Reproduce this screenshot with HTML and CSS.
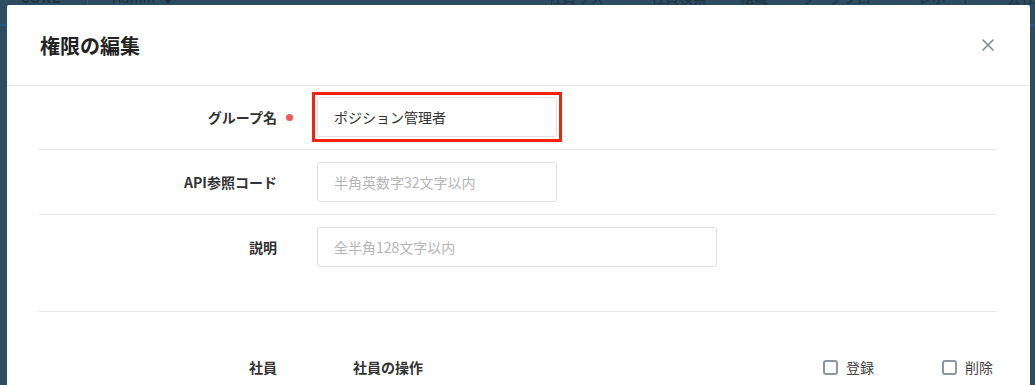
FILE: index.html
```html
<!DOCTYPE html>
<html lang="ja">

<head>
    <meta charset="UTF-8">
    <meta name="viewport" content="width=device-width, initial-scale=1.0">
    <title>権限の編集</title>
    <link rel="stylesheet" href="styles.css">
</head>

<body>
    <!-- Página de fondo (tapada por el modal) -->
    <header class="nav">
        <span class="nav-logo">CORE</span>
        <span class="nav-divider"></span>
        <span class="nav-admin">Admin <span class="nav-caret"></span></span>
        <nav class="nav-menu">
            <span>社員リスト</span>
            <span>社員検索</span>
            <span>組織</span>
            <span>ワークフロー</span>
            <span>レポート</span>
            <span>会社</span>
        </nav>
    </header>

    <div class="overlay">
        <div class="modal">
            <div class="modal-header">
                <h1 class="modal-title">権限の編集</h1>
                <button class="modal-close" type="button" aria-label="閉じる">
                    <svg width="12" height="12" viewBox="0 0 12 12">
                        <path d="M1 1 L11 11 M11 1 L1 11" stroke="#7d8a97" stroke-width="1.6" stroke-linecap="round" fill="none" />
                    </svg>
                </button>
            </div>

            <div class="modal-body">
                <div class="form-row">
                    <label class="form-label required">グループ名</label>
                    <span class="highlight">
                        <input class="form-input" type="text" value="ポジション管理者">
                    </span>
                </div>
                <div class="form-row">
                    <label class="form-label">API参照コード</label>
                    <input class="form-input" type="text" placeholder="半角英数字32文字以内">
                </div>
                <div class="form-row form-row-tall">
                    <label class="form-label">説明</label>
                    <input class="form-input form-input-wide" type="text" placeholder="全半角128文字以内">
                </div>

                <div class="perm-row">
                    <span class="form-label">社員</span>
                    <span class="perm-name">社員の操作</span>
                    <div class="perm-checks">
                        <label class="check"><span class="check-box"></span>登録</label>
                        <label class="check"><span class="check-box"></span>削除</label>
                    </div>
                </div>
            </div>
        </div>
    </div>
</body>

</html>
```

FILE: styles.css
```css
body {
    margin: 0;
    padding: 0;
    height: 385px;
    overflow: hidden;
    background: #2d4b61;
    font-family: "Noto Sans CJK JP", "Noto Sans", sans-serif;
    color: #333;
}

/* Barra de navegación detrás del modal */
.nav {
    display: flex;
    align-items: flex-start;
    height: 36px;
    margin-top: -10px;
    border-bottom: 2px solid #245a85;
    box-sizing: border-box;
    font-size: 14px;
    line-height: 14px;
    color: #1b3244;
}

.nav-logo {
    margin-left: 20px;
    font-weight: bold;
    letter-spacing: 1px;
}

.nav-divider {
    width: 1px;
    height: 16px;
    margin-left: 25px;
    background: #3d5b70;
}

.nav-admin {
    margin-left: 25px;
    display: flex;
    align-items: flex-end;
    gap: 8px;
}

.nav-caret {
    width: 0;
    height: 0;
    border-left: 5px solid transparent;
    border-right: 5px solid transparent;
    border-top: 6px solid #1b3244;
}

.nav-menu {
    display: flex;
    gap: 33px;
    margin-left: 375px;
}

/* Modal */
.overlay {
    position: fixed;
    top: 0;
    left: 0;
    right: 0;
    bottom: 0;
    padding: 5px 0 0 7px;
}

.modal {
    width: 1023px;
    height: 420px;
    background: #fff;
    border-radius: 2px;
}

.modal-header {
    height: 80px;
    display: flex;
    align-items: center;
    justify-content: space-between;
    padding: 0 36px 0 33px;
    border-bottom: 1px solid #e6e6e6;
}

.modal-title {
    margin: 0;
    font-size: 20px;
    font-weight: bold;
    color: #222;
    line-height: 1;
    padding-top: 2px;
}

.modal-close {
    border: none;
    background: none;
    padding: 0;
    width: 12px;
    height: 12px;
    display: flex;
    cursor: pointer;
}

.modal-body {
    padding: 0 33px 0 32px;
}

.form-row {
    display: flex;
    align-items: center;
    padding: 12px 0;
    border-bottom: 1px solid #e8e8e8;
}

.form-row:first-child {
    padding-top: 11px;
}

.form-row-tall {
    align-items: flex-start;
    padding-bottom: 44px;
}

.form-row-tall .form-label {
    line-height: 40px;
}

.form-label {
    width: 238px;
    flex-shrink: 0;
    text-align: right;
    font-size: 14px;
    font-weight: bold;
    color: #333;
    position: relative;
}

.form-label.required::after {
    content: "";
    position: absolute;
    right: -16px;
    top: 50%;
    width: 7px;
    height: 7px;
    margin-top: -3px;
    border-radius: 50%;
    background: #f25757;
}

.form-input {
    margin-left: 40px;
    width: 240px;
    height: 40px;
    box-sizing: border-box;
    border: 1px solid #dde1e6;
    border-radius: 3px;
    padding: 0 16px;
    font-family: inherit;
    font-size: 14px;
    color: #333;
    outline: none;
    display: block;
}

.form-input::placeholder {
    color: #b5b5b5;
}

.form-input-wide {
    width: 400px;
}

/* marco rojo de la captura */
.highlight {
    display: block;
    margin: -5px 0 -5px 35px;
    padding: 2px;
    border: 3px solid #f5220d;
}

.highlight .form-input {
    margin-left: 0;
}

/* Permisos */
.perm-row {
    display: flex;
    align-items: center;
    padding: 45px 4px 0 0;
    font-size: 14px;
    line-height: 20px;
}

.perm-name {
    margin-left: 76px;
    font-weight: bold;
    color: #333;
}

.perm-checks {
    margin-left: auto;
    display: flex;
    gap: 68px;
}

.check {
    display: flex;
    align-items: center;
    gap: 8px;
    color: #444;
}

.check-box {
    width: 15px;
    height: 15px;
    box-sizing: border-box;
    border: 2px solid #8d97a1;
    border-radius: 3px;
}
```
